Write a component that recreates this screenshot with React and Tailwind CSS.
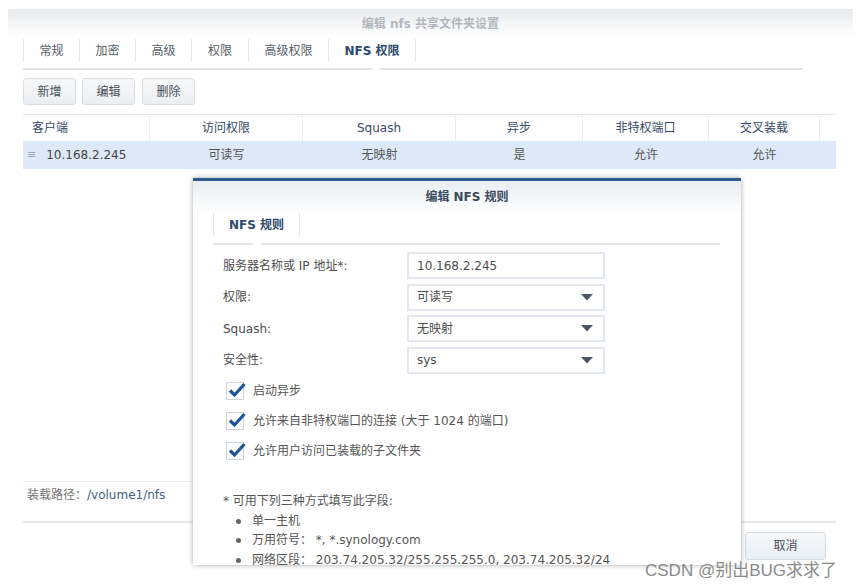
import React from 'react';

const font = { fontFamily: '"DejaVu Sans", "Noto Sans CJK SC", sans-serif' };

const tabs = [
  { label: '常规', w: 'w-[57px]' },
  { label: '加密', w: 'w-[56px]' },
  { label: '高级', w: 'w-[56px]' },
  { label: '权限', w: 'w-[57px]' },
  { label: '高级权限', w: 'w-[80px]' },
  { label: 'NFS 权限', w: 'w-[87px]', active: true },
];

const cols = [
  { label: '客户端', value: '10.168.2.245', w: 'w-[127px]', left: true },
  { label: '访问权限', value: '可读写', w: 'w-[153px]' },
  { label: 'Squash', value: '无映射', w: 'w-[153px]' },
  { label: '异步', value: '是', w: 'w-[127px]' },
  { label: '非特权端口', value: '允许', w: 'w-[126px]' },
  { label: '交叉装载', value: '允许', w: 'w-[111px]' },
];

const Caret = () => (
  <svg width="12" height="7" viewBox="0 0 12 7" className="shrink-0">
    <path d="M0 0h12L6 6.5z" fill="#4b5563" />
  </svg>
);

const Check = ({ label }) => (
  <div className="flex items-center h-[30px]">
    <div className="relative w-[18px] h-[18px] border border-[#cdd5de] bg-white ml-[3px]">
      <svg width="20" height="18" viewBox="0 0 20 18" className="absolute left-[0px] top-[-2px]">
        <path d="M3 9.5l4.5 4.5L17.5 3" stroke="#1d5597" strokeWidth="3.2" fill="none" />
      </svg>
    </div>
    <span className="ml-[9px] text-[12px] text-[#555]">{label}</span>
  </div>
);

const Field = ({ label, value, select }) => (
  <div className="flex items-center h-[31.5px]">
    <div className="w-[184px] text-[12px] text-[#4d4d4d]">{label}</div>
    <div className="w-[198px] h-[27px] border-2 border-[#e3e8ee] flex items-center justify-between pl-[8px] pr-[10px] text-[12px] text-[#4d4d4d]">
      <span>{value}</span>
      {select && <Caret />}
    </div>
  </div>
);

export default function App() {
  return (
    <div className="relative w-[866px] h-[588px] bg-white overflow-hidden" style={font}>
      <div className="pt-[9px] pl-[8px]">
        {/* window header */}
        <div className="w-[845px] h-[27px] bg-gradient-to-b from-[#e8eaed] to-white flex items-center justify-center pt-[2px]">
          <span className="text-[12px] font-bold text-[#b3b7bc]">编辑 nfs 共享文件夹设置</span>
        </div>

        <div className="pl-[15px]">
          {/* tabs */}
          <div className="w-[780px] border-b-2 border-[#e3e5e8] relative">
            <div className="flex h-[32px] pt-[3px] pb-[6px]">
              {tabs.map((t, i) => (
                <div
                  key={t.label}
                  className={`${t.w} flex items-center justify-center border-r border-[#e6e9ec] ${i === 0 ? 'border-l' : ''} text-[12px] ${t.active ? 'font-bold text-[#2b4a6d]' : 'text-[#555d66]'}`}
                >
                  {t.label}
                </div>
              ))}
            </div>
            <div className="absolute left-[348px] bottom-[-2px] w-0 h-0 border-l-[5px] border-r-[5px] border-b-[5px] border-l-transparent border-r-transparent border-b-white" />
          </div>

          {/* buttons */}
          <div className="flex gap-[6px] mt-[8px] h-[27px]">
            {['新增', '编辑', '删除'].map((b, i) => (
              <button
                key={b}
                className={`w-[53px] h-[27px] rounded-[3px] border border-[#d7dde3] bg-gradient-to-b from-[#f7f8f9] to-[#eceff2] text-[12px] text-[#4a4f55] ${i === 2 ? 'ml-[1px]' : ''}`}
              >
                {b}
              </button>
            ))}
          </div>

          {/* table */}
          <div className="mt-[9px] w-[813px] border-t border-[#e1e8f0]">
            <div className="flex h-[26px]">
              {cols.map((c) => (
                <div
                  key={c.label}
                  className={`${c.w} border-r border-[#e6edf5] flex items-center text-[12px] text-[#364a66] ${c.left ? 'pl-[9px]' : 'justify-center'}`}
                >
                  {c.label}
                </div>
              ))}
            </div>
            <div className="flex h-[28px] bg-[#dde9f8]">
              {cols.map((c) => (
                <div
                  key={c.label}
                  className={`${c.w} flex items-center ${c.left ? 'pl-[4px] text-[12px] text-[#444]' : 'justify-center text-[12px] text-[#555]'}`}
                >
                  {c.left && <span className="text-[#a0a6ad] mr-[10px] text-[11px]">≡</span>}
                  {c.value}
                </div>
              ))}
            </div>
          </div>

          <div className="h-[312px]" />
          <div className="w-[813px] border-t border-[#eceff2] h-[40px] pt-[4px] pl-[4px] text-[12px]">
            <span className="text-[#777]">装载路径：</span>
            <span className="text-[#3f5d86]">/volume1/nfs</span>
          </div>
          <div className="w-[813px] border-t-2 border-[#e6e8eb] flex justify-end pr-[10px] pt-[9px]">
            <button className="w-[81px] h-[28px] rounded-[3px] border border-[#d3dbe4] bg-gradient-to-b from-[#f6f8fa] to-[#e9eef3] text-[12px] text-[#4a4f55]">
              取消
            </button>
          </div>
        </div>
      </div>

      {/* white patch in the collage */}
      <div className="absolute left-[742px] top-[449px] w-[124px] h-[59px] bg-white" />

      {/* dialog */}
      <div className="absolute left-[193px] top-[178px] w-[548px] h-[387px] bg-white border-t-[3px] border-[#2d5b8d] shadow-[0_0_5px_rgba(0,0,0,0.35)] overflow-hidden">
        <div className="h-[32px] bg-gradient-to-b from-[#e9edf1] to-white flex items-center justify-center">
          <span className="text-[12px] font-bold text-[#3c4b5c]">编辑 NFS 规则</span>
        </div>
        <div className="ml-[20px] w-[507px] border-b-2 border-[#e3e5e8] relative">
          <div className="flex h-[30px] pb-[6px]">
            <div className="w-[87px] border-l border-r border-[#e6e9ec] flex items-center justify-center text-[12px] font-bold text-[#2b4a6d]">
              NFS 规则
            </div>
          </div>
          <div className="absolute left-[39px] bottom-[-2px] w-0 h-0 border-l-[5px] border-r-[5px] border-b-[5px] border-l-transparent border-r-transparent border-b-white" />
        </div>

        <div className="pl-[30px] pt-[5px]">
          <Field label="服务器名称或 IP 地址*:" value="10.168.2.245" />
          <Field label="权限:" value="可读写" select />
          <Field label="Squash:" value="无映射" select />
          <Field label="安全性:" value="sys" select />
          <div>
            <Check label="启动异步" />
            <Check label="允许来自非特权端口的连接 (大于 1024 的端口)" />
            <Check label="允许用户访问已装载的子文件夹" />
          </div>
          <div className="mt-[26px] text-[12px] text-[#555] leading-[19.5px]">
            <div>* 可用下列三种方式填写此字段:</div>
            <ul className="pl-[13px]">
              {['单一主机', '万用符号： *, *.synology.com', '网络区段： 203.74.205.32/255.255.255.0, 203.74.205.32/24'].map((t) => (
                <li key={t} className="flex items-center">
                  <span className="w-[5px] h-[5px] rounded-full bg-[#666] mr-[11px]" />
                  {t}
                </li>
              ))}
            </ul>
          </div>
        </div>
      </div>

      {/* watermark */}
      <div
        className="absolute left-[645px] top-[558px] text-[17px] text-[#8a8a8a] whitespace-nowrap"
        style={{ fontFamily: '"Liberation Sans", "Noto Sans CJK SC", sans-serif' }}
      >
        CSDN @别出BUG求求了
      </div>
    </div>
  );
}
